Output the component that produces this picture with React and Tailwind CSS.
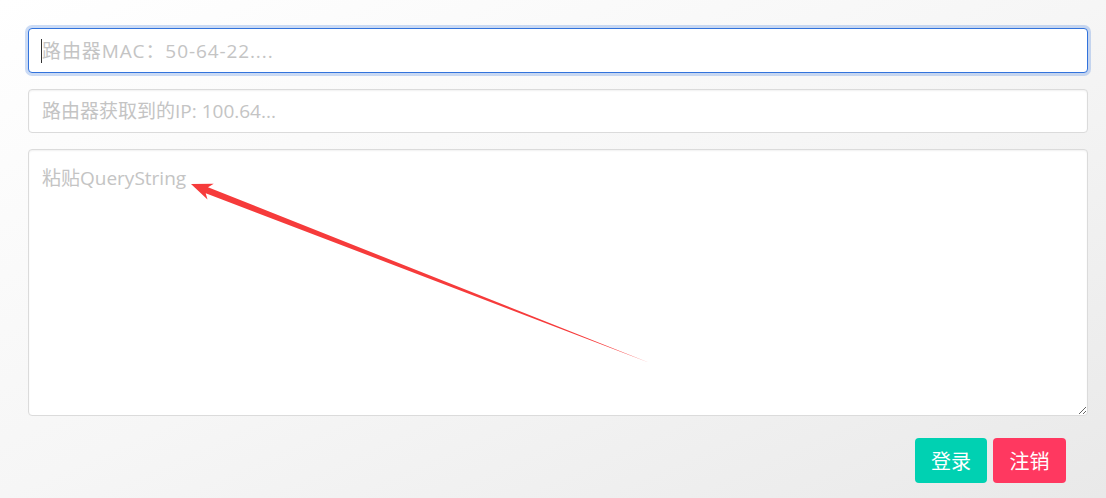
import React from "react";

function Arrow() {
  const tip = [191, 184];
  const tail = [650, 363];
  const dx = tail[0] - tip[0];
  const dy = tail[1] - tip[1];
  const len = Math.hypot(dx, dy);
  const ux = dx / len, uy = dy / len;
  const nx = -uy, ny = ux;
  const headLen = 21, headHalf = 8.5, shaftHalf = 3.2;
  const hb = [tip[0] + ux * headLen, tip[1] + uy * headLen];
  const pts = [
    tip,
    [hb[0] + nx * headHalf, hb[1] + ny * headHalf],
    [hb[0] - ux * 4 + nx * shaftHalf, hb[1] - uy * 4 + ny * shaftHalf],
    [tail[0], tail[1]],
    [hb[0] - ux * 4 - nx * shaftHalf, hb[1] - uy * 4 - ny * shaftHalf],
    [hb[0] - nx * headHalf, hb[1] - ny * headHalf],
  ]
    .map((p) => p.map((v) => v.toFixed(1)).join(","))
    .join(" ");
  return (
    <svg
      className="absolute left-0 top-0 pointer-events-none"
      width="1106"
      height="498"
      viewBox="0 0 1106 498"
    >
      <polygon points={pts} fill="#f63b3b" />
    </svg>
  );
}

export default function App() {
  return (
    <div className="relative w-[1106px] h-[498px] overflow-hidden bg-gradient-to-br from-[#ffffff] via-[#f6f6f6] to-[#e9e9e9] font-['Open_Sans','Noto_Sans_CJK_SC',sans-serif]">
      <div className="pl-[28px] pr-[18px] pt-[28px] flex flex-col">
        <div className="relative">
          <input
            readOnly
            placeholder="路由器MAC：50-64-22...."
            className="w-full h-[45px] rounded-[4px] border border-[#3273dc] bg-white px-[13px] text-[19px] tracking-[0.9px] text-[#363636] placeholder:text-[#c4c4c4] outline-none shadow-[0_0_0_3px_rgba(50,115,220,0.25)]"
          />
          <span className="absolute left-[13px] top-[11px] w-px h-[24px] bg-[#333]" />
        </div>
        <input
          readOnly
          placeholder="路由器获取到的IP: 100.64..."
          className="mt-[16px] w-full h-[44px] rounded-[4px] border border-[#dbdbdb] bg-white px-[13px] text-[19px] text-[#363636] placeholder:text-[#c4c4c4] outline-none shadow-[inset_0_1px_2px_rgba(10,10,10,0.06)]"
        />
        <textarea
          readOnly
          placeholder="粘贴QueryString"
          className="mt-[16px] w-full h-[267px] rounded-[4px] border border-[#dbdbdb] bg-white px-[13px] pt-[14px] pb-[12px] text-[19px] leading-[1.5] text-[#363636] placeholder:text-[#c4c4c4] outline-none resize-y shadow-[inset_0_1px_2px_rgba(10,10,10,0.06)]"
        />
        <div className="mt-[22px] flex justify-end gap-[6px] pr-[22px]">
          <button className="w-[72px] h-[45px] rounded-[4px] bg-[#00d1b2] text-white text-[20px] flex items-center justify-center font-['Noto_Sans_CJK_SC',sans-serif]">
            登录
          </button>
          <button className="w-[73px] h-[45px] rounded-[4px] bg-[#ff3860] text-white text-[20px] flex items-center justify-center font-['Noto_Sans_CJK_SC',sans-serif]">
            注销
          </button>
        </div>
      </div>
      <Arrow />
    </div>
  );
}
